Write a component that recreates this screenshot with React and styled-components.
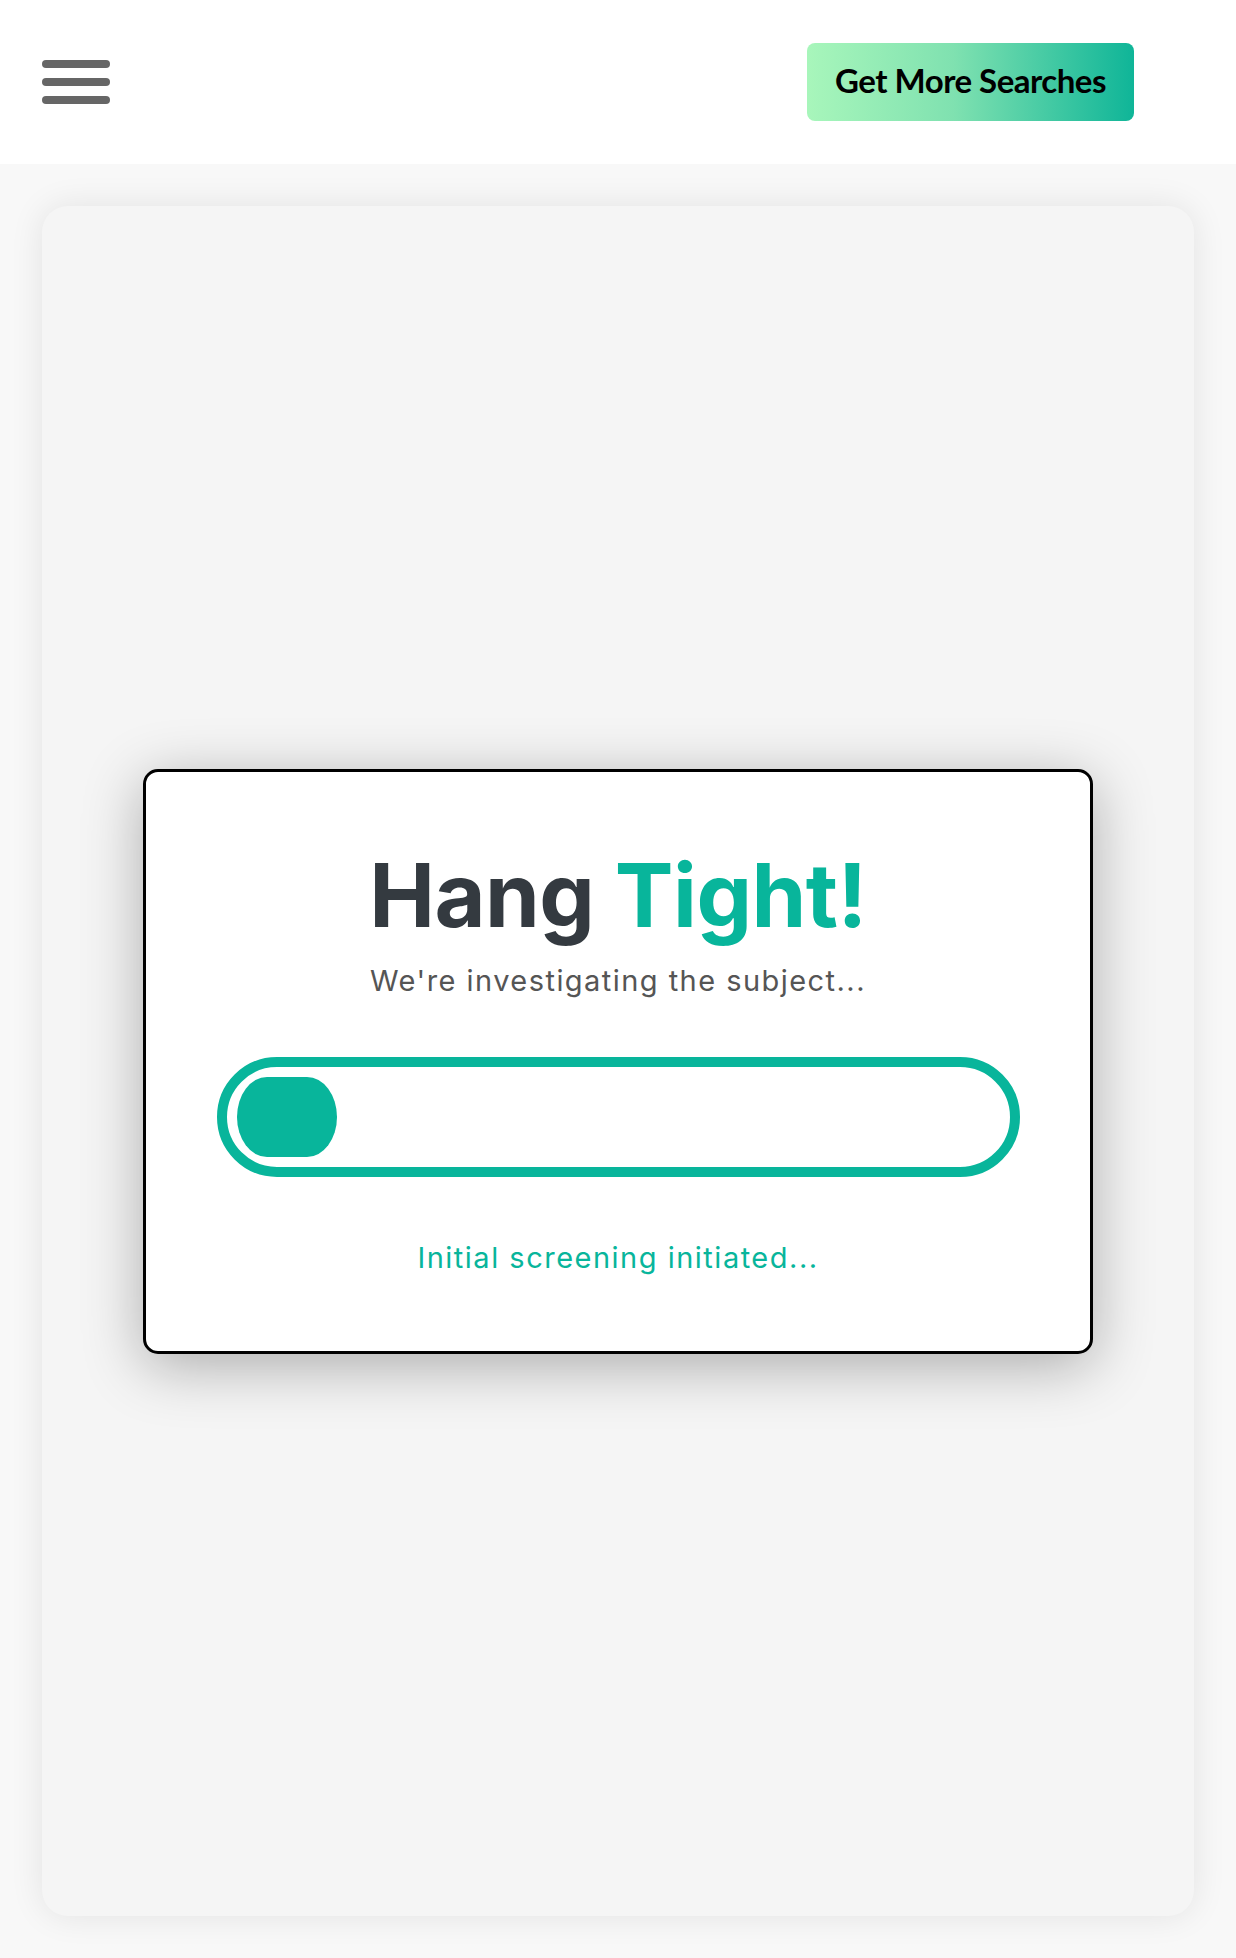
import React from "react";
import styled, { createGlobalStyle } from "styled-components";

const Global = createGlobalStyle`
  html, body { margin: 0; padding: 0; background: #f8f8f8; }
  body { font-family: Inter, "Noto Sans", sans-serif; }
  * { box-sizing: border-box; }
`;

const TEAL = "#08b59b";

const Page = styled.div`
  min-height: 1958px;
  display: flex;
  flex-direction: column;
`;

const Header = styled.header`
  height: 164px;
  background: #ffffff;
  display: flex;
  align-items: center;
  justify-content: space-between;
  padding: 0 102px 0 42px;
`;

const Burger = styled.button`
  display: flex;
  flex-direction: column;
  gap: 10px;
  padding: 0;
  border: 0;
  background: transparent;
  cursor: pointer;
`;

const BurgerBar = styled.span`
  display: block;
  width: 68px;
  height: 8px;
  border-radius: 4px;
  background: #666666;
`;

const CtaButton = styled.button`
  width: 327px;
  height: 78px;
  padding: 0 0 4px;
  border: 0;
  border-radius: 8px;
  background: linear-gradient(90deg, #a8f6bb 0%, #7fe1b0 45%, #0fb598 100%);
  color: #000;
  font-family: Lato, "Open Sans", sans-serif;
  font-weight: 700;
  font-size: 33px;
  letter-spacing: -0.5px;
  cursor: pointer;
`;

const Main = styled.main`
  flex: 1;
  padding: 42px;
  display: flex;
`;

const Card = styled.section`
  flex: 1;
  height: 1710px;
  background: #f5f5f5;
  border-radius: 26px;
  box-shadow: 0 0 34px rgba(0, 0, 0, 0.09);
  display: flex;
  align-items: center;
  justify-content: center;
`;

const Modal = styled.div`
  width: 950px;
  background: #ffffff;
  border: 3px solid #000;
  border-radius: 15px;
  box-shadow: 0 12px 60px rgba(0, 0, 0, 0.3);
  padding: 79px 70px 75px;
  display: flex;
  flex-direction: column;
  align-items: center;
`;

const Title = styled.h1`
  margin: 0;
  font-family: Inter, sans-serif;
  font-weight: 700;
  font-size: 88px;
  line-height: 88px;
  letter-spacing: -0.5px;
  color: #343a40;
`;

const Accent = styled.span`
  color: ${TEAL};
`;

const Subtitle = styled.p`
  margin: 24px 0 0;
  font-family: Inter, sans-serif;
  font-size: 29px;
  line-height: 36px;
  letter-spacing: 1.45px;
  color: #555555;
`;

const Track = styled.div`
  margin-top: 58px;
  width: 803px;
  height: 120px;
  border: 10px solid ${TEAL};
  border-radius: 60px;
  padding: 10px;
  display: flex;
`;

const Fill = styled.div`
  height: 80px;
  background: ${TEAL};
  border-radius: 30px / 40px;
`;

const Status = styled.p`
  margin: 63px 0 0;
  font-family: Inter, sans-serif;
  font-size: 29px;
  line-height: 36px;
  letter-spacing: 1.5px;
  color: ${TEAL};
`;

export default function App() {
  const progress = 100;
  return (
    <>
      <Global />
      <Page>
        <Header>
          <Burger aria-label="menu">
            <BurgerBar />
            <BurgerBar />
            <BurgerBar />
          </Burger>
          <CtaButton>Get More Searches</CtaButton>
        </Header>
        <Main>
          <Card>
            <Modal>
              <Title>
                Hang <Accent>Tight!</Accent>
              </Title>
              <Subtitle>We're investigating the subject...</Subtitle>
              <Track>
                <Fill style={{ width: `${progress}px` }} />
              </Track>
              <Status>Initial screening initiated...</Status>
            </Modal>
          </Card>
        </Main>
      </Page>
    </>
  );
}
